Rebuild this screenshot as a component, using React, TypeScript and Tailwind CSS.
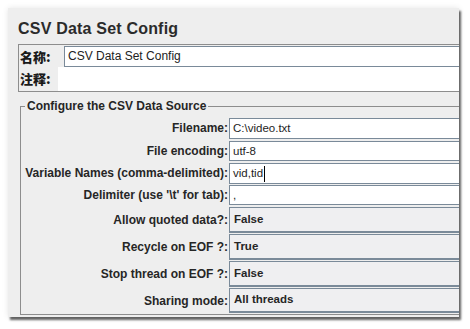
const labelCls = "w-[208px] shrink-0 pr-[1px] text-right text-[12px] font-bold text-[#262626]";

const textRows = [
  { label: "Filename:", value: "C:\\video.txt", h: "h-[23px]", ih: "h-[21px]" },
  { label: "File encoding:", value: "utf-8", h: "h-[22px]", ih: "h-[20px]" },
  { label: "Variable Names (comma-delimited):", value: "vid,tid", h: "h-[22px]", ih: "h-[21px]", caret: true },
  { label: "Delimiter (use '\\t' for tab):", value: ",", h: "h-[22px]", ih: "h-[20px]" },
];

const comboRows = [
  { label: "Allow quoted data?:", value: "False" },
  { label: "Recycle on EOF ?:", value: "True" },
  { label: "Stop thread on EOF ?:", value: "False" },
  { label: "Sharing mode:", value: "All threads" },
];

export default function App() {
  return (
    <div className="w-[470px] h-[329px] bg-white pl-[8px] pt-[8px] font-['Liberation_Sans',Arial,'Noto_Sans_CJK_SC',sans-serif]">
      <div className="w-[451px] h-[309px] overflow-hidden bg-[#eeeeee] shadow-[2px_3px_2px_rgba(0,0,0,0.6),0_0_6px_rgba(0,0,0,0.1)]">
        {/* title */}
        <div className="pl-[10px] pt-[11px] h-[36px] text-[16px] leading-[20px] font-bold text-[#2b2b2b] tracking-[0.2px]">
          CSV Data Set Config
        </div>

        {/* name / comment */}
        <div className="ml-[10px] w-[460px] border border-[#8d8d8d] pt-[1px]">
          <div className="flex items-center">
            <span className="w-[45px] shrink-0 pl-[1px] text-[13px] font-black text-[#1a1a1a] font-['Noto_Sans_CJK_SC',sans-serif]">名称:</span>
            <div className="flex-1 h-[21px] border border-[#7a8a99] bg-white pl-[3px] text-[12px] leading-[19px] text-[#222]">
              CSV Data Set Config
            </div>
          </div>
          <div className="flex items-center">
            <span className="w-[39px] shrink-0 pl-[1px] text-[13px] font-black text-[#1a1a1a] font-['Noto_Sans_CJK_SC',sans-serif]">注释:</span>
            <div className="flex-1 h-[24px] bg-white" />
          </div>
        </div>

        {/* csv data source */}
        <fieldset className="mt-[6px] ml-[12px] w-[460px] border border-[#8d8d8d] pb-[1px]">
          <legend className="ml-[4px] px-[2px] text-[12px] leading-[16px] font-bold text-[#262626]">
            Configure the CSV Data Source
          </legend>
          <div className="pt-[4px] flex flex-col">
            {textRows.map((r) => (
              <div key={r.label} className={`flex items-start ${r.h}`}>
                <span className={`${labelCls} leading-[21px]`}>{r.label}</span>
                <div className={`flex-1 ${r.ih} border border-[#7a8a99] bg-white pl-[3px] text-[11.5px] leading-[19px] text-[#1e1e1e] flex items-center`}>
                  {r.value}
                  {r.caret && <span className="ml-[1px] w-[1px] h-[16px] bg-black" />}
                </div>
              </div>
            ))}
            {comboRows.map((r, i) => (
              <div key={r.label} className={`flex items-center ${i < 3 ? "h-[26px] mb-[1px]" : "h-[25px]"}`}>
                <span className={labelCls}>{r.label}</span>
                <div className="flex-1 h-full border border-[#7a8a99] border-b-2 bg-[#efeff1] pl-[4px] text-[11.5px] font-bold text-[#262626] flex items-center">
                  {r.value}
                </div>
              </div>
            ))}
          </div>
        </fieldset>
      </div>
    </div>
  );
}
